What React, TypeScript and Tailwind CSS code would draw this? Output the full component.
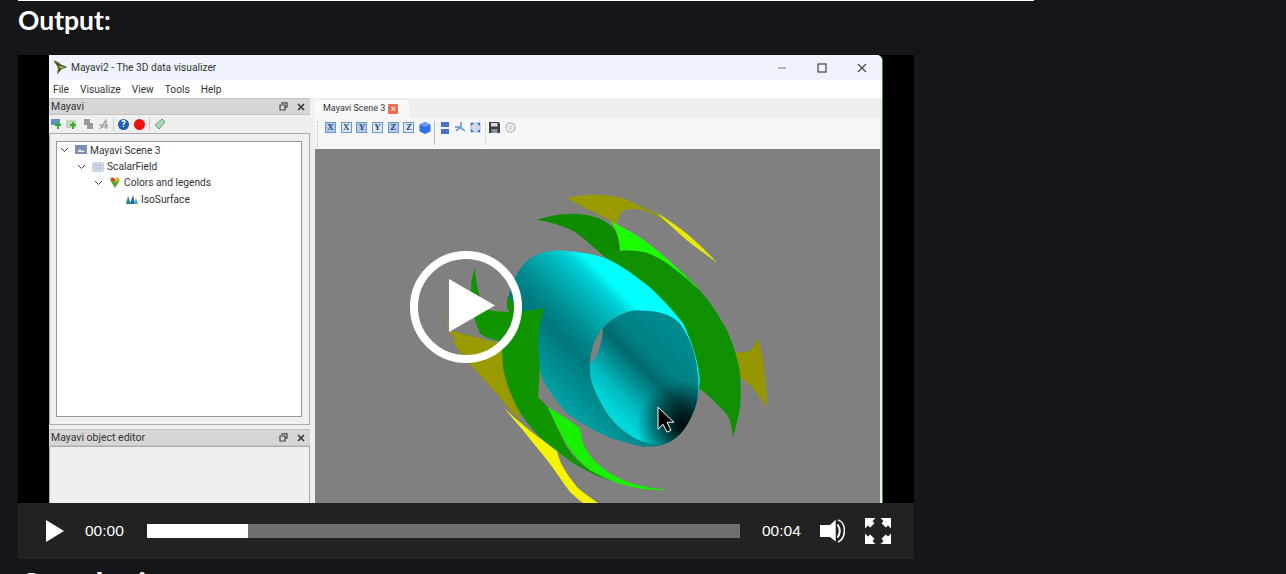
const uiFont = "font-['Roboto',sans-serif]";

function Dock({ title }: { title: string }) {
  return (
    <div className="flex h-[17px] items-center justify-between border-y border-[#c4c4c4] bg-[#d6d6d6] pl-[2px] pr-[5px] text-[10.5px] text-[#333]">
      <span>{title}</span>
      <div className="flex items-center gap-[9px]">
        <svg width="9" height="9" viewBox="0 0 9 9" fill="none" stroke="#444" strokeWidth="1.2">
          <path d="M3 2V.8h5v4.4H6.5M1 3h5v5H1z" />
        </svg>
        <svg width="8" height="8" viewBox="0 0 8 8" stroke="#333" strokeWidth="1.6">
          <path d="M1 1l6 6M7 1L1 7" />
        </svg>
      </div>
    </div>
  );
}

function Chevron() {
  return (
    <svg width="9" height="6" viewBox="0 0 9 6" fill="none" stroke="#444" strokeWidth="1">
      <path d="M1 1l3.5 3.5L8 1" />
    </svg>
  );
}

function TreeRow({ indent, open, icon, label }: { indent: string; open: boolean; icon: React.ReactNode; label: string }) {
  return (
    <div className={`flex h-[16.4px] items-center text-[10.2px] text-[#333] ${indent}`}>
      <span className="flex w-[15px] justify-start">{open && <Chevron />}</span>
      <span className="flex w-[15px]">{icon}</span>
      <span>{label}</span>
    </div>
  );
}

function AxisButton({ axis, light }: { axis: string; light?: boolean }) {
  return (
    <span
      className={`flex h-[11px] w-[11px] items-center justify-center border border-[#6f94c8] font-['Liberation_Serif',serif] text-[9px] font-bold leading-none text-[#2a4a78] ${
        light ? "bg-[#dfe7f3]" : "bg-[#b4cbea]"
      }`}
    >
      {axis}
    </span>
  );
}

function MayaviToolbar() {
  return (
    <div className="relative flex h-[31px] shrink-0 items-center bg-[#f6f6f6] pb-[12px] pl-[10px]">
      <span className="absolute left-[2px] top-[3px] h-[26px] border-l border-dotted border-[#bbb]" />
      <div className="flex items-center gap-[4.7px]">
        <AxisButton axis="X" />
        <AxisButton axis="X" light />
        <AxisButton axis="Y" />
        <AxisButton axis="Y" light />
        <AxisButton axis="Z" />
        <AxisButton axis="Z" light />
        <svg width="12" height="12" viewBox="0 0 12 12">
          <path d="M6 0l5.5 2.4v7L6 12 .5 9.4v-7z" fill="#2f6fe0" />
          <path d="M.5 2.4L6 5l5.5-2.6L6 0z" fill="#6f9cf0" />
        </svg>
      </div>
      <div className="ml-[3px] mr-[6px] h-[24px] w-px translate-y-[5px] bg-[#bbb]" />
      <svg width="8" height="12" viewBox="0 0 8 12">
        <path d="M0 0h8v5H0zM0 7h8v5H0z" fill="#4a72c4" />
      </svg>
      <svg className="ml-[6px]" width="11" height="11" viewBox="0 0 11 11" fill="none">
        <path d="M6 0v5M1 9l4.5-3.5L10 9M0 5h5" stroke="#5a8ec8" strokeWidth="1.5" />
      </svg>
      <svg className="ml-[4px]" width="11" height="11" viewBox="0 0 11 11">
        <rect width="11" height="11" fill="#cfd8e6" />
        <path d="M1 1h3L1 4zM10 1v3L7 1zM1 10V7l3 3zM10 10H7l3-3z" fill="#2b69b8" />
      </svg>
      <div className="ml-[4px] mr-[3px] h-[24px] w-px translate-y-[5px] bg-[#ddd]" />
      <svg width="11" height="11" viewBox="0 0 11 11">
        <path d="M0 0h9.5L11 1.5V11H0z" fill="#3a3f4a" />
        <rect x="2" y="1" width="6.5" height="3.5" fill="#d8dce2" />
        <rect x="2.5" y="7" width="6" height="4" fill="#8d93a0" />
      </svg>
      <svg className="ml-[5px]" width="11" height="11" viewBox="0 0 11 11" fill="none" stroke="#b0b0b8">
        <circle cx="5.5" cy="5.5" r="4.5" strokeWidth="1.5" strokeDasharray="2 .6" />
        <circle cx="5.5" cy="5.5" r="1.5" />
      </svg>
    </div>
  );
}

function SceneDrawing() {
  return (
    <svg viewBox="315 148 565 355" preserveAspectRatio="none" className="block h-full w-full">
      <defs>
        <linearGradient id="torus" gradientUnits="userSpaceOnUse" x1="525" y1="375" x2="625" y2="275">
          <stop offset="0" stopColor="#00a6aa" />
          <stop offset="0.365" stopColor="#00787c" />
          <stop offset="0.5" stopColor="#008a8e" />
          <stop offset="0.7" stopColor="#00b4b8" />
          <stop offset="0.82" stopColor="#00d4d8" />
          <stop offset="0.9" stopColor="#00ffff" />
          <stop offset="1" stopColor="#00ffff" />
        </linearGradient>
        <linearGradient id="hole" gradientUnits="userSpaceOnUse" x1="600" y1="400" x2="670" y2="330">
          <stop offset="0" stopColor="#00d8dc" />
          <stop offset="0.19" stopColor="#00bcc0" />
          <stop offset="0.38" stopColor="#008e92" />
          <stop offset="0.53" stopColor="#006a6e" />
          <stop offset="0.7" stopColor="#008084" />
          <stop offset="1" stopColor="#008a8e" />
        </linearGradient>
        <radialGradient id="holeShade" gradientUnits="userSpaceOnUse" cx="682" cy="425" r="45">
          <stop offset="0" stopColor="#000" stopOpacity="0.95" />
          <stop offset="0.5" stopColor="#000" stopOpacity="0.5" />
          <stop offset="1" stopColor="#000" stopOpacity="0" />
        </radialGradient>
        <clipPath id="holeClip">
          <path id="holeShape" d="M633 310C655 309 671 313 680 323C692 340 697 358 698 377C699 395 697 404 693 413C686 430 676 440 667 443C654 446 643 442 633 437C623 431 614 423 607 413C598 398 591 385 590 373C589 360 592 348 597 337C602 328 611 315 633 310z" />
        </clipPath>
      </defs>

      {/* olive and yellow fins behind the surface */}
      <path d="M567 197C580 193 615 191 633 202C642 206 650 210 657 213C675 228 697 243 717 262C705 252 692 240 680 231C672 226 664 220 657 215C645 209 632 206 624 210C620 212 618 218 617 223C600 214 582 207 567 197z" fill="#999900" />
      <path d="M657 212C668 219 678 226 687 233C697 242 708 252 717 262C706 254 695 246 685 238C675 229 665 220 657 212z" fill="#e8e800" />
      <path d="M735 352C742 352 747 352 750 350C754 347 756 342 758 337C764 360 767 385 767 407C762 400 757 393 753 388C748 383 744 380 740 377z" fill="#969600" />
      <path d="M443 290C444 305 447 322 450 330L452 340L500 342L503 367L520 420C512 412 505 404 500 397C490 385 481 376 473 367C465 358 458 349 452 340C447 325 444 308 443 290z" fill="#999900" />
      <path d="M450 330L508 345L520 420L472 365z" fill="#999900" />
      <path d="M502 405C508 412 514 417 520 422C532 433 545 442 557 450C558 456 560 462 563 467C567 474 572 481 577 487C583 493 591 498 598 503H583C578 499 574 496 570 492C562 482 555 470 547 460C539 450 531 440 523 430C516 422 509 414 502 405z" fill="#f4f400" />

      {/* green shell */}
      <path d="M537 219C548 216 560 213 570 213C582 213 592 215 600 218C606 221 610 224 613 227C618 232 619 242 620 250L607 258C597 250 585 238 573 230C562 225 549 221 537 219z" fill="#0e8c00" />
      <path d="M620 250C630 249 640 250 647 252C658 256 668 261 677 267C686 274 693 282 700 290C712 304 720 317 727 330C733 344 738 358 740 373C741 385 741 396 740 407C738 418 736 428 733 437C732 430 731 425 730 420C727 414 724 410 720 407C713 400 706 393 698 387L698 370L683 323L650 287L607 258z" fill="#0f9000" />
      <path d="M610 220C621 226 631 231 640 237C653 246 665 256 677 267C686 275 693 282 700 290C692 283 685 276 677 270C667 262 657 256 647 252C638 250 629 249 620 250C620 243 619 231 610 220z" fill="#1cff00" />
      <path d="M475 267C472 275 471 283 471 290C472 302 473 312 475 320L480 333C487 338 495 340 502 341C502 350 502 358 503 367C506 382 511 395 517 407C523 418 531 428 540 437C546 443 553 448 560 453C572 463 586 471 600 477C622 485 645 488 667 490C650 489 634 486 620 482C609 479 599 475 590 470C581 464 573 456 567 447C560 434 554 420 548 407C544 403 541 400 538 397L540 367L538 340L544 308L520 311C510 312 500 311 490 310C482 305 477 295 475 267z" fill="#109400" />
      <path d="M548 407C558 413 570 420 580 428C581 433 582 438 583 443C587 452 592 458 597 463C606 472 620 480 634 484C645 487 656 489 667 490C650 491 634 488 620 484C609 480 598 475 590 470C581 463 573 454 567 445C560 433 554 420 548 407z" fill="#18f000" />

      {/* teal torus, the left green fin comes back over it */}
      <path d="M507 307C509 285 517 270 527 260C538 252 550 249 563 250C578 251 593 253 607 258C623 266 637 276 650 287C662 298 673 310 683 323C692 341 698 360 700 380C699 393 697 403 693 413C687 427 678 437 667 443C658 447 649 447 640 446C626 443 612 439 600 433C588 427 577 421 567 413C558 403 550 392 543 380C540 371 538 362 537 353L507 307z" fill="url(#torus)" />
      <path d="M507 307C507 302 507 300 508 295L520 311L544 308C540 320 538 333 538 345L540 367L530 350z" fill="#109400" />
      <use href="#holeShape" fill="url(#hole)" />
      <rect x="630" y="375" width="100" height="95" fill="url(#holeShade)" clipPath="url(#holeClip)" />
      <path d="M603 327C596 335 590 350 590 363C597 358 602 345 603 327z" fill="#808080" />

      {/* recorded mouse pointer */}
      <path d="M658 407v22l5-5 4 8 4-2-4-8h7z" fill="#000" stroke="#fff" strokeWidth="1" />
    </svg>
  );
}

function MayaviWindow() {
  return (
    <div className={`flex h-[448px] w-[834px] flex-col overflow-hidden rounded-tr-[6px] border-r border-[#3c8c3c] bg-white ${uiFont}`}>
      <div className="flex h-[25px] shrink-0 items-center justify-between bg-[#eff3fb]">
        <div className="flex items-center gap-[3px] pl-[4px] text-[10.2px] text-[#333]">
          <svg width="15" height="15" viewBox="0 0 15 15">
            <path d="M.5 .5C3 .8 6 2.5 8 4.5L14.5 7 9 9 4 14.5C4.5 11.5 5 9.5 5 8C4 5.5 2 3 .5 .5z" fill="#4d5f22" />
            <path d="M5.5 6L12 7 7.5 8.5z" fill="#b4cc50" />
          </svg>
          <span>Mayavi2 - The 3D data visualizer</span>
        </div>
        <div className="flex items-center gap-[30px] pr-[15px]">
          <svg width="10" height="10" viewBox="0 0 10 10" stroke="#777">
            <path d="M1 5h8" />
          </svg>
          <svg width="10" height="10" viewBox="0 0 10 10" fill="none" stroke="#444" strokeWidth="1.2">
            <rect x="1" y="1" width="8" height="8" />
          </svg>
          <svg width="10" height="10" viewBox="0 0 10 10" stroke="#444" strokeWidth="1.1">
            <path d="M1 1l8 8M9 1L1 9" />
          </svg>
        </div>
      </div>
      <div className="flex h-[18px] shrink-0 items-center gap-[11px] bg-white pl-[4px] pt-[1px] text-[10.2px] text-[#333]">
        <span>File</span>
        <span>Visualize</span>
        <span>View</span>
        <span>Tools</span>
        <span>Help</span>
      </div>
      <div className="flex min-h-0 flex-1 bg-[#efefef]">
        <div className="flex w-[261px] shrink-0 flex-col">
          <Dock title="Mayavi" />
          <div className="flex h-[18px] shrink-0 items-center pl-[2px]">
            <svg width="11" height="11" viewBox="0 0 11 11"><path d="M0 0h9v6H0z" fill="#5f93bf" /><path d="M4 5h2V3h2v2h2v2H8v3H6V7H4z" fill="#2fae2f" /></svg>
            <svg className="ml-[4px]" width="12" height="11" viewBox="0 0 12 11"><path d="M0 1h10v8H0z" fill="#bfd9bf" /><path d="M4 5h2V3h2v2h2v2H8v3H6V7H4z" fill="#2fae2f" /></svg>
            <svg className="ml-[5px]" width="11" height="11" viewBox="0 0 11 11"><path d="M1 0h6v6H1zM4 4h6v6H4z" fill="#9a9a9a" /></svg>
            <svg className="ml-[4px]" width="11" height="11" viewBox="0 0 11 11" fill="none" stroke="#999" strokeWidth="1.2"><path d="M2 10L8 1v9M1 6h9M4 8h6" /></svg>
            <span className="ml-[4px] h-[14px] w-px bg-[#ccc]" />
            <span className="ml-[4px] flex h-[11px] w-[11px] items-center justify-center rounded-full bg-[#1f5fae] text-[9px] font-bold leading-none text-white">?</span>
            <span className="ml-[5px] h-[11px] w-[11px] rounded-full bg-[#f01010]" />
            <span className="ml-[4px] h-[14px] w-px bg-[#ccc]" />
            <svg className="ml-[4px]" width="12" height="12" viewBox="0 0 12 12"><path d="M1 7l7-6 3 3-6 7z" fill="#a8d8b0" stroke="#4a8a6a" strokeWidth=".8" /></svg>
          </div>
          <div className="flex h-[292px] shrink-0 flex-col border border-[#aaa] py-[7px] pl-[6px] pr-[7px]">
            <div className="flex-1 border border-[#999] bg-white pl-[3px]">
              <TreeRow
                indent=""
                open
                label="Mayavi Scene 3"
                icon={<svg width="12" height="10" viewBox="0 0 12 10"><rect width="12" height="9" fill="#7a90b0" /><path d="M2 7l3-3 2 2 1-1 2 2z" fill="#dfe7f2" /></svg>}
              />
              <TreeRow
                indent="pl-[17px]"
                open
                label="ScalarField"
                icon={<svg width="12" height="10" viewBox="0 0 12 10"><rect width="12" height="10" fill="#d2dcea" /><path d="M0 3h12M0 6h12M4 0v10M8 0v10" stroke="#a8b6c8" strokeWidth=".6" /></svg>}
              />
              <TreeRow
                indent="pl-[34px]"
                open
                label="Colors and legends"
                icon={<svg width="12" height="11" viewBox="0 0 12 11"><path d="M6 5L1 3l2-3 3 2z" fill="#d84020" /><path d="M6 5l5-2-2-3-3 2z" fill="#e8b020" /><path d="M6 5L1 3l5 8 5-8z" fill="#50a830" /></svg>}
              />
              <TreeRow
                indent="pl-[51px]"
                open={false}
                label="IsoSurface"
                icon={<svg width="12" height="9" viewBox="0 0 12 9"><path d="M0 9l2-8 3 8z" fill="#2a8a70" /><path d="M4 9l3-9 2 9z" fill="#2a5fb0" /><path d="M8 9l2-6 2 6z" fill="#48a8c8" /></svg>}
              />
            </div>
          </div>
          <div className="mt-[4px]">
            <Dock title="Mayavi object editor" />
          </div>
          <div className="flex-1 border border-b-0 border-[#aaa]" />
        </div>
        <div className="ml-[5px] mr-[2px] flex min-w-0 flex-1 flex-col">
          <div className="h-[20px] shrink-0 pt-[2px]">
            <div className="-ml-[1px] flex h-[18px] w-[95px] items-center gap-[3px] bg-[#f8f8f8] pl-[9px] text-[9px] text-[#333]">
              <span className="whitespace-nowrap">Mayavi Scene 3</span>
              <span className="flex h-[10px] w-[10px] items-center justify-center rounded-[1px] bg-[#e8704c] text-[9px] font-bold leading-none text-[#fde]">×</span>
            </div>
          </div>
          <MayaviToolbar />
          <div className="min-h-0 flex-1 bg-[#808080]">
            <SceneDrawing />
          </div>
        </div>
      </div>
    </div>
  );
}

function VideoPlayer() {
  return (
    <div className="relative w-[896px]">
      <div className="flex h-[448px] justify-center bg-black">
        <MayaviWindow />
      </div>
      <div className="flex h-[56px] items-center bg-[#222] font-['Liberation_Sans',sans-serif] text-[15.5px] text-white">
        <svg className="ml-[28px]" width="18" height="22" viewBox="0 0 18 22">
          <path d="M0 0l18 11L0 22z" fill="#fff" />
        </svg>
        <span className="ml-[21px] w-[39px]">00:00</span>
        <div className="ml-[23px] h-[14px] w-[593px] bg-[#6f6f6f]">
          <div className="h-full w-[101px] bg-white" />
        </div>
        <span className="ml-[22px] w-[40px]">00:04</span>
        <svg className="ml-[18px]" width="25" height="24" viewBox="0 0 25 24" fill="none">
          <path d="M0 6h10L15.7 .7V22.5L10 18H0z" fill="#fff" />
          <path d="M17.5 5.5Q22 12 17.5 18.5" stroke="#fff" strokeWidth="2" />
          <path d="M18 1C26 3 27 19 18 23" stroke="#fff" strokeWidth="1.5" />
        </svg>
        <svg className="ml-[20px]" width="26" height="26" viewBox="0 0 26 26" fill="#fff">
          <path id="fsCorner" d="M0 0h10.5L7.5 3 9.5 5.2 5.2 9.5 3 7.5 0 10.5z" />
          <use href="#fsCorner" transform="translate(26 0) scale(-1 1)" />
          <use href="#fsCorner" transform="translate(0 26) scale(1 -1)" />
          <use href="#fsCorner" transform="translate(26 26) scale(-1 -1)" />
        </svg>
      </div>
      {/* big play overlay */}
      <div className="absolute left-[392px] top-[196px] flex h-[112px] w-[112px] items-center justify-center rounded-full border-[8px] border-white">
        <svg width="46" height="53" viewBox="0 0 46 53" className="-mt-[3px] ml-[12px]">
          <path d="M0 0l46 26.5L0 53z" fill="#fff" />
        </svg>
      </div>
    </div>
  );
}

export default function App() {
  return (
    <div className="h-[574px] overflow-hidden bg-[#14161a] pl-[18px] font-['Lato',sans-serif]">
      <hr className="w-[1016px] border-t border-white" />
      <h2 className="h-[54px] text-[26.5px] font-bold leading-[38px] text-white">Output:</h2>
      <VideoPlayer />
      <h2 className="mt-[4px] text-[34px] font-bold leading-[44px] text-white">Conclusion</h2>
    </div>
  );
}
